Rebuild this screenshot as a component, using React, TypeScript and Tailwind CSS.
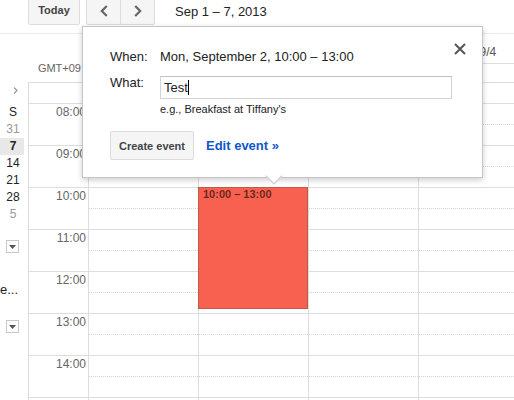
import React from 'react';

const hours = ['07:00', '08:00', '09:00', '10:00', '11:00', '12:00', '13:00', '14:00', '15:00'];
// only labels that show in the scrolled window get text
const shownHours = ['08:00', '09:00', '10:00', '11:00', '12:00', '13:00', '14:00'];
const days = ['Sun 9/1', 'Mon 9/2', 'Tue 9/3', 'Wed 9/4'];

const miniCal = [
  { label: 'S', cls: 'text-[#222]' },
  { label: '31', cls: 'text-[#999]' },
  { label: '7', cls: 'text-[#222] font-bold bg-[#e8e8e8]' },
  { label: '14', cls: 'text-[#222]' },
  { label: '21', cls: 'text-[#222]' },
  { label: '28', cls: 'text-[#222]' },
  { label: '5', cls: 'text-[#999]' },
];

function Chevron({ dir }: { dir: 'left' | 'right' }) {
  return (
    <svg width="8" height="12" viewBox="0 0 8 12" className="block">
      <path
        d={dir === 'left' ? 'M6.8 1 L1.8 6 L6.8 11' : 'M1.2 1 L6.2 6 L1.2 11'}
        fill="none"
        stroke="#666"
        strokeWidth="2.2"
      />
    </svg>
  );
}

function DropArrow() {
  return (
    <div className="w-[13px] h-[13px] border border-[#c8c8c8] bg-white flex items-center justify-center">
      <svg width="7" height="4" viewBox="0 0 7 4" className="block">
        <path d="M0 0 H7 L3.5 4 Z" fill="#555" />
      </svg>
    </div>
  );
}

function Toolbar() {
  return (
    <div className="flex items-start h-[34px] border-b border-[#ebebeb]">
      <div className="ml-[28px] -mt-[4px] h-[29px] w-[52px] flex items-center justify-center bg-[#f5f5f5] border border-[#dcdcdc] rounded-[2px] text-[11px] font-bold text-[#444]">
        Today
      </div>
      <div className="ml-[6px] -mt-[4px] flex h-[29px]">
        <div className="w-[35px] h-full flex items-center justify-center bg-[#f5f5f5] border border-[#dcdcdc] rounded-l-[2px]">
          <Chevron dir="left" />
        </div>
        <div className="-ml-px w-[35px] h-full flex items-center justify-center bg-[#f5f5f5] border border-[#dcdcdc] rounded-r-[2px]">
          <Chevron dir="right" />
        </div>
      </div>
      <div className="ml-[20px] mt-[4px] text-[13px] leading-[16px] text-[#222]">Sep 1 – 7, 2013</div>
    </div>
  );
}

function Sidebar() {
  return (
    <div className="w-[28px] shrink-0 overflow-hidden">
      <svg width="5" height="7" viewBox="0 0 5 7" className="block mt-[53px] ml-[13px]">
        <path d="M1 0.5 L4 3.5 L1 6.5" fill="none" stroke="#999" strokeWidth="1.2" />
      </svg>
      <div className="mt-[10px] text-[12px]">
        {miniCal.map((d) => (
          <div key={d.label} className={`w-[24px] h-[17px] leading-[17px] pl-[2px] text-center ${d.cls}`}>
            {d.label}
          </div>
        ))}
      </div>
      <div className="mt-[17px] ml-[6px]">
        <DropArrow />
      </div>
      <div className="mt-[29px] text-[13px] leading-[16px] whitespace-nowrap text-[#222]">e...</div>
      <div className="mt-[22px] ml-[6px]">
        <DropArrow />
      </div>
    </div>
  );
}

function WeekView() {
  return (
    <div className="flex flex-col shrink-0">
      {/* day headers + all-day row; the first three sit under the popup */}
      <div className="flex">
        <div className="w-[61px] h-[48px] shrink-0 pt-[28px] pr-[8px] text-right text-[11px] leading-[13px] text-[#666]">
          GMT+09
        </div>
        {days.map((d, i) => (
          <div key={d} className="w-[110px] shrink-0 flex flex-col">
            <div className="h-[30px] border-b border-[#dddddd] pt-[11px] text-center text-[12px] leading-[14px] text-[#555]">
              {i === 3 ? d : null}
            </div>
            <div className="h-[18px]" />
          </div>
        ))}
      </div>

      {/* time grid, scrolled to 07:30 */}
      <div className="h-[318px] overflow-hidden border-t border-l border-[#dddddd]">
        <div className="flex -mt-[22px]">
          <div className="w-[60px] shrink-0 border-r border-[#dddddd]">
            {hours.map((h) => (
              <div
                key={h}
                className="h-[42px] border-t border-[#dddddd] pt-[1px] pr-[2px] text-right text-[12px] leading-[14px] text-[#666]"
              >
                {shownHours.includes(h) ? h : null}
              </div>
            ))}
          </div>
          {days.map((d, i) => (
            <div key={d} className="relative w-[110px] shrink-0 border-r border-[#dddddd]">
              {hours.map((h) => (
                <div key={h} className="h-[42px] border-t border-[#dddddd]">
                  <div className="mt-[20px] border-t border-dotted border-[#d6d6d6]" />
                </div>
              ))}
              {i === 1 && (
                <div className="absolute left-[-1px] top-[126px] w-[110px] h-[122px] bg-[#f8614f] border border-[#bd5a4c] pl-[4px] text-[11px] leading-[13px] font-bold text-black/60">
                  10:00 – 13:00
                </div>
              )}
            </div>
          ))}
        </div>
      </div>
    </div>
  );
}

function QuickAddPopup() {
  return (
    <div className="absolute left-[82px] top-[26px] w-[401px] h-[152px] bg-white border border-[#c6c6c6] shadow-[0_2px_6px_rgba(0,0,0,0.2)]">
      <div className="pl-[27px] pt-[22px] text-[13px] leading-[16px] text-[#222]">
        <div className="flex">
          <div className="w-[50px] shrink-0">When:</div>
          <div>Mon, September 2, 10:00 – 13:00</div>
        </div>
        <div className="flex items-start mt-[11px]">
          <div className="w-[50px] shrink-0 -mt-px">What:</div>
          <div className="w-[292px] h-[23px] border border-[#d4d4d4] border-t-[#c0c0c0] pl-[3px] flex items-center">
            <span>Test</span>
            <span className="w-px h-[15px] bg-black" />
          </div>
        </div>
        <div className="ml-[50px] mt-[4px] text-[11px] leading-[13px]">e.g., Breakfast at Tiffany's</div>
        <div className="flex items-center mt-[15px]">
          <div className="w-[84px] h-[29px] flex items-center justify-center bg-[#f5f5f5] border border-[#dcdcdc] rounded-[2px] text-[11px] font-bold text-[#444]">
            Create event
          </div>
          <div className="ml-[12px] text-[13px] font-bold text-[#15c]">Edit event »</div>
        </div>
      </div>
      <svg width="12" height="12" viewBox="0 0 12 12" className="absolute top-[16px] right-[16px]">
        <path d="M1 1 L11 11 M11 1 L1 11" stroke="#555" strokeWidth="2" />
      </svg>
      <div className="absolute left-[185px] -bottom-[5px] w-3 h-3 bg-white border-r border-b border-[#c6c6c6] rotate-45" />
    </div>
  );
}

export default function App() {
  return (
    <div className="relative w-[514px] h-[400px] overflow-hidden bg-white font-['Liberation_Sans',Arial,sans-serif]">
      <Toolbar />
      <div className="flex">
        <Sidebar />
        <WeekView />
      </div>
      <QuickAddPopup />
    </div>
  );
}
